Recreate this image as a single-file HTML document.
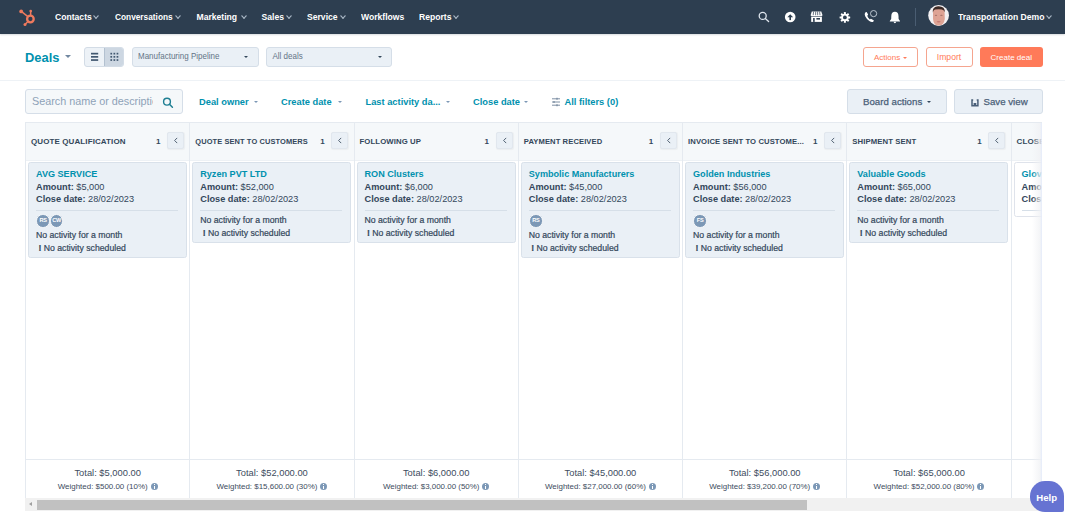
<!DOCTYPE html>
<html><head><meta charset="utf-8">
<style>
*{box-sizing:border-box;margin:0;padding:0}
html,body{width:1065px;height:522px;overflow:hidden;background:#fff;font-family:"Liberation Sans",sans-serif;color:#33475b}
.a{position:absolute;white-space:nowrap}
#nav{position:absolute;left:0;top:0;width:1065px;height:34px;background:#2d3e50;box-shadow:0 1px 1.5px rgba(45,62,80,0.18);z-index:2}
.ni{position:absolute;top:11px;font-size:8.6px;font-weight:bold;color:#fff;line-height:12px;transform:scaleY(1.1);transform-origin:0 50%}
.chev{display:inline-block;width:4px;height:4px;border-right:1px solid #aab8c6;border-bottom:1px solid #aab8c6;transform:rotate(45deg);position:absolute;top:3px}
.dd{position:absolute;top:46.5px;height:20px;background:#eaf0f6;border:1px solid #d5dee8;border-radius:3px;font-size:8px;color:#637486;line-height:18.5px}
.dd .caret{border-left-width:2.2px;border-right-width:2.2px;border-top-width:2.7px;top:8px}
.caret{position:absolute;width:0;height:0;border-left:3px solid transparent;border-right:3px solid transparent;border-top:3px solid #33475b}
.flt{position:absolute;top:96px;font-size:9.3px;font-weight:bold;color:#0091ae;line-height:12px}
.flt .caret{border-top-color:#7c98b6;top:5px;border-left-width:2px;border-right-width:2px;border-top-width:2.5px}
.btn2{position:absolute;top:89px;height:25px;background:#eaf0f6;border:1px solid #d5dee8;border-radius:3px;font-size:9.7px;color:#4a5f78;line-height:23px;-webkit-text-stroke:0.25px #4a5f78}
#board{position:absolute;left:25px;top:122px;width:1017px;height:376px;border:1px solid #e5eaf0;border-right:none;border-bottom:none;overflow:hidden}
.col{position:absolute;top:0;width:164.4px;height:376px;border-right:1px solid #e5eaf0}
.hdr{position:absolute;left:0;top:0;width:100%;height:38px;background:#f5f8fa;border-bottom:1px solid #edf1f5}
.ht{position:absolute;left:5px;top:14px;font-size:8px;font-weight:bold;color:#33475b;line-height:10px;letter-spacing:0.1px}
.hn{position:absolute;left:130px;top:14px;font-size:8px;font-weight:bold;line-height:10px}
.cb{position:absolute;left:141px;top:9px;width:17px;height:17px;background:#eaf0f6;border:1px solid #e1e7ee;border-radius:2px;box-shadow:0.5px 0.5px 1px rgba(0,0,0,0.04)}
.card{position:absolute;left:2px;top:39px;width:159px;background:#eaf0f6;border:1px solid #d9e1ea;border-radius:2.5px}
.nm{position:absolute;left:7px;top:4.5px;font-size:9.1px;font-weight:bold;color:#0091ae;line-height:12px}
.l1{position:absolute;left:7px;top:17.5px;font-size:9.2px;line-height:12px}
.l2{position:absolute;left:7px;top:30px;font-size:9.2px;line-height:12px}
.l1 b,.l2 b{font-weight:bold}
.sep{position:absolute;left:7px;top:47px;width:142px;height:1px;background:#d6dfe8}
.av{position:absolute;top:51px;width:13.5px;height:13.5px;border-radius:50%;background:#7c98b6;border:1px solid #f7f9fb;color:#fff;font-size:5.6px;font-weight:bold;text-align:center;line-height:11.5px;letter-spacing:-0.2px}
.na{position:absolute;left:7px;font-size:8.7px;line-height:10px;color:#33475b;-webkit-text-stroke:0.2px #33475b}
.ftr{position:absolute;left:0;top:336px;width:100%;height:40px;border-top:1px solid #e5eaf0;background:#fff}
.tot{position:absolute;left:0;top:7px;width:100%;text-align:center;font-size:9.35px;line-height:12px;color:#3d4c5e}
.wt{position:absolute;left:0;top:21.5px;width:100%;text-align:center;font-size:7.95px;line-height:10px;color:#3d4c5e}
.info{display:inline-block;width:7px;height:7px;border-radius:50%;background:#7c98b6;vertical-align:-1px;margin-left:3px;position:relative}
.info:after{content:"";position:absolute;left:3px;top:3px;width:1px;height:3px;background:#fff}
.info:before{content:"";position:absolute;left:3px;top:1.3px;width:1px;height:1px;background:#fff}
</style></head><body>
<div id="nav">
 <svg class="a" style="left:14px;top:6px" width="24" height="24" viewBox="14 6 24 24">
  <g stroke="#ef7a5e" fill="none" stroke-linecap="round">
   <circle cx="30.4" cy="19" r="3.3" stroke-width="2.3"/>
   <line x1="30.6" y1="15.4" x2="30.7" y2="11.6" stroke-width="1.5"/>
   <line x1="27.9" y1="16.6" x2="21.6" y2="11.7" stroke-width="1.5"/>
   <line x1="28" y1="21.5" x2="25.2" y2="24.3" stroke-width="1.5"/>
  </g>
  <circle cx="30.7" cy="11" r="1.3" fill="#ef7a5e"/>
  <circle cx="21.2" cy="11.4" r="1.9" fill="#ef7a5e"/>
  <circle cx="25" cy="24.6" r="1.5" fill="#ef7a5e"/>
 </svg>
 <div class="ni" style="left:55px">Contacts<span class="chev" style="left:39px"></span></div>
 <div class="ni" style="left:115px;font-size:8.3px">Conversations<span class="chev" style="left:60.5px"></span></div>
 <div class="ni" style="left:196.5px">Marketing<span class="chev" style="left:45px"></span></div>
 <div class="ni" style="left:261.5px">Sales<span class="chev" style="left:25.5px"></span></div>
 <div class="ni" style="left:307px">Service<span class="chev" style="left:34px"></span></div>
 <div class="ni" style="left:361px">Workflows</div>
 <div class="ni" style="left:419px">Reports<span class="chev" style="left:34.5px"></span></div>


 <svg class="a" style="left:752px;top:6px" width="160" height="22" viewBox="752 6 160 22">
  <circle cx="762.7" cy="15.9" r="3.5" stroke="#dfe6ee" stroke-width="1.3" fill="none"/>
  <line x1="765.3" y1="18.6" x2="768.6" y2="21.6" stroke="#dfe6ee" stroke-width="1.3" stroke-linecap="round"/>
  <circle cx="790.2" cy="17" r="5.3" fill="#fff"/>
  <path d="M787.3 17.2 L790.2 14.2 L793.1 17.2 Z" fill="#2d3e50"/>
  <rect x="789.4" y="16.5" width="1.6" height="3.6" fill="#2d3e50"/>
  <path d="M811.8 11.6 H821.3 L822.5 15.2 Q822.3 15.9 821.5 15.9 H811.6 Q810.8 15.9 810.6 15.2 Z" fill="#fff"/>
  <g stroke="#2d3e50" stroke-width="0.7"><line x1="813.6" y1="11.6" x2="813.2" y2="15.2"/><line x1="815.7" y1="11.6" x2="815.6" y2="15.2"/><line x1="817.6" y1="11.6" x2="817.7" y2="15.2"/><line x1="819.6" y1="11.6" x2="820" y2="15.2"/></g>
  <rect x="811.2" y="16.6" width="10.7" height="5.3" fill="#fff"/>
  <rect x="813.1" y="18" width="1.6" height="3.9" fill="#2d3e50"/>
  <rect x="816.4" y="18" width="3.6" height="1.6" fill="#2d3e50"/>
  <g transform="translate(844.9 17.4)" fill="#fff">
   <circle r="3.7"/>
   <rect x="-1" y="-5.3" width="2" height="2.4" rx="0.3" transform="rotate(0)"/><rect x="-1" y="-5.3" width="2" height="2.4" rx="0.3" transform="rotate(45)"/><rect x="-1" y="-5.3" width="2" height="2.4" rx="0.3" transform="rotate(90)"/><rect x="-1" y="-5.3" width="2" height="2.4" rx="0.3" transform="rotate(135)"/><rect x="-1" y="-5.3" width="2" height="2.4" rx="0.3" transform="rotate(180)"/><rect x="-1" y="-5.3" width="2" height="2.4" rx="0.3" transform="rotate(225)"/><rect x="-1" y="-5.3" width="2" height="2.4" rx="0.3" transform="rotate(270)"/><rect x="-1" y="-5.3" width="2" height="2.4" rx="0.3" transform="rotate(315)"/>
   <circle r="1.9" fill="#2d3e50"/>
  </g>
  <path d="M866.6 12.1 L868 14.3 Q868.2 14.8 867.8 15.2 L867.2 15.8 Q867.9 17.8 869.9 19.6 L870.5 19 Q870.9 18.6 871.4 18.9 L873.6 20.3 Q874.1 20.7 873.6 21.3 L872.8 21.9 Q871.5 22.5 869.3 21 Q866.5 19 865.2 16.2 Q864.4 14.3 864.9 13.2 L865.6 12.3 Q866.1 11.7 866.6 12.1 Z" fill="#fff"/>
  <circle cx="873.6" cy="13.6" r="3.1" stroke="#c9d3dd" stroke-width="0.9" fill="none"/>
  <path d="M894.9 11.8 Q898.3 11.8 898.5 16 L898.6 19 L900 20.9 Q900.2 21.4 899.6 21.4 H890.2 Q889.6 21.4 889.8 20.9 L891.2 19 L891.3 16 Q891.5 11.8 894.9 11.8 Z" fill="#fff"/>
  <path d="M893.6 21.8 H896.2 Q896 23.2 894.9 23.2 Q893.8 23.2 893.6 21.8 Z" fill="#fff"/>
 </svg>
 <div class="a" style="left:915px;top:8px;width:1px;height:18px;background:#4a5d72"></div>
 <svg class="a" style="left:927px;top:4px" width="23" height="23" viewBox="927 4 23 23">
  <defs><clipPath id="avc"><circle cx="938.6" cy="15.5" r="10.3"/></clipPath></defs>
  <circle cx="938.6" cy="15.5" r="10.4" fill="#f3f1f3"/>
  <g clip-path="url(#avc)">
   <path d="M933 12 Q932.6 7 938.5 6.4 Q944.6 6.8 944.6 12 L944.8 19 Q944 25 938.8 26 Q933.6 25.5 933 19 Z" fill="#dea394"/>
   <path d="M932.8 12.5 Q932 6.8 938.4 6.2 Q945.2 6.4 944.8 12.3 Q943.8 9.6 941.8 9.4 Q938 9 935 9.6 Q933.4 10.2 932.8 12.5 Z" fill="#3b2a26"/>
   <ellipse cx="936" cy="15.2" rx="1.2" ry="0.5" fill="#9c6a62"/>
   <ellipse cx="941.4" cy="15.2" rx="1.2" ry="0.5" fill="#9c6a62"/>
   <ellipse cx="938.7" cy="21.8" rx="2" ry="0.7" fill="#c77a72"/>
  </g>
 </svg>
 <div class="ni" style="left:958px">Transportation Demo<span class="chev" style="left:89px"></span></div>
</div>

<!-- header row -->
<div class="a" style="left:25px;top:48px;font-size:12.9px;font-weight:bold;color:#0091ae;line-height:20px">Deals</div>
<div class="caret" style="left:64.5px;top:55px;border-left-width:3.5px;border-right-width:3.5px;border-top-width:3.8px;border-top-color:#7187a0"></div>
<div class="a" style="left:84px;top:46.5px;width:40px;height:20px;border:1px solid #d3dce6;border-radius:3px;background:#edf2f7;overflow:hidden">
 <div class="a" style="left:19px;top:0;width:20px;height:18px;background:#cdd7e2;border-left:1px solid #b3c1d0"></div>
 <svg class="a" style="left:-1px;top:-1px" width="40" height="20" viewBox="84 47 40 20">
  <g fill="#425870"><rect x="91" y="52.8" width="7.2" height="1.7"/><rect x="91" y="56" width="7.2" height="1.7"/><rect x="91" y="59.2" width="7.2" height="1.7"/></g>
  <g fill="#425870"><rect x="110.4" y="52.8" width="1.7" height="1.7"/><rect x="113.5" y="52.8" width="1.7" height="1.7"/><rect x="116.6" y="52.8" width="1.7" height="1.7"/>
  <rect x="110.4" y="56" width="1.7" height="1.7"/><rect x="113.5" y="56" width="1.7" height="1.7"/><rect x="116.6" y="56" width="1.7" height="1.7"/>
  <rect x="110.4" y="59.2" width="1.7" height="1.7"/><rect x="113.5" y="59.2" width="1.7" height="1.7"/><rect x="116.6" y="59.2" width="1.7" height="1.7"/></g>
 </svg>
</div>
<div class="dd" style="left:132px;width:126.5px"><span class="a" style="left:5px;top:0.8px;transform:scaleY(1.12)">Manufacturing Pipeline</span><span class="caret" style="left:110.5px"></span></div>
<div class="dd" style="left:266px;width:126px"><span class="a" style="left:5.5px;top:0.8px;transform:scaleY(1.12)">All deals</span><span class="caret" style="left:110.5px"></span></div>

<div class="a" style="left:863px;top:47px;width:55px;height:20px;border:1px solid #f5a58f;border-radius:3px;background:#fff;color:#ff7a59;font-size:8px;line-height:19.5px;text-indent:10px">Actions<span class="caret" style="left:38.5px;top:8.5px;border-top-color:#ff7a59;border-left-width:2px;border-right-width:2px;border-top-width:2.5px"></span></div>
<div class="a" style="left:925.5px;top:47px;width:47px;height:20px;border:1px solid #f5a58f;border-radius:3px;background:#fff;color:#ff7a59;font-size:8.6px;line-height:19.5px;text-align:center">Import</div>
<div class="a" style="left:980px;top:47px;width:62.5px;height:20px;border-radius:3px;background:#ff7a59;color:#fff;font-size:8px;line-height:21px;text-align:center">Create deal</div>

<div class="a" style="left:0;top:80px;width:1065px;height:1px;background:#eef2f6"></div>

<!-- filter row -->
<div class="a" style="left:25px;top:88.5px;width:158px;height:25.5px;border:1px solid #d5dee8;border-radius:3px;background:#f5f8fa"></div>
<div class="a" style="left:32px;top:95px;font-size:10.8px;line-height:13px;color:#8ea2b8;width:121px;overflow:hidden">Search name or description</div>
<svg class="a" style="left:162px;top:96.5px" width="12" height="12" viewBox="0 0 12 12"><circle cx="5" cy="4.7" r="3.4" stroke="#1f7f93" stroke-width="1.4" fill="none"/><line x1="7.5" y1="7.3" x2="10.4" y2="10.2" stroke="#1f7f93" stroke-width="1.5" stroke-linecap="round"/></svg>

<div class="flt" style="left:199px">Deal owner<span class="caret" style="left:55px"></span></div>
<div class="flt" style="left:281px">Create date<span class="caret" style="left:57px"></span></div>
<div class="flt" style="left:365.5px">Last activity da...<span class="caret" style="left:80px"></span></div>
<div class="flt" style="left:473px">Close date<span class="caret" style="left:51px"></span></div>
<svg class="a" style="left:551px;top:97px" width="10" height="10" viewBox="0 0 10 10"><g stroke="#6f839a" stroke-width="0.9"><line x1="1" y1="1.8" x2="9" y2="1.8"/><line x1="1" y1="5" x2="9" y2="5"/><line x1="1" y1="8.2" x2="9" y2="8.2"/></g><g stroke="#6f839a" stroke-width="1.1"><line x1="6" y1="0.8" x2="6" y2="2.8"/><line x1="3" y1="4" x2="3" y2="6"/><line x1="6" y1="7.2" x2="6" y2="9.2"/></g></svg>
<div class="flt" style="left:564.5px">All filters (0)</div>

<div class="btn2" style="left:847px;width:100px"><span class="a" style="left:15px">Board actions</span><span class="caret" style="left:78.5px;top:10.5px;border-left-width:2px;border-right-width:2px;border-top-width:2.5px"></span></div>
<div class="btn2" style="left:954px;width:89px"><svg class="a" style="left:15.5px;top:8.5px" width="8" height="8" viewBox="0 0 8 8"><path d="M1 0.3V6.8H6.9V0.3 M1 0.9H2.2 M5.7 0.9H6.9" stroke="#4a5f78" stroke-width="1.5" fill="none"/><rect x="2.6" y="4" width="2.7" height="2" fill="#4a5f78"/></svg><span class="a" style="left:28.5px">Save view</span></div>

<!-- board -->
<div id="board">
<div class="col" style="left:0.0px">
 <div class="hdr"><span class="ht" style="font-size:8px">QUOTE QUALIFICATION</span><span class="hn">1</span><span class="cb"><svg style="position:absolute;left:5.2px;top:3.7px" width="6" height="7" viewBox="0 0 6 7"><path d="M4.2 0.9 L1.6 3.5 L4.2 6.1" stroke="#4a5a6c" stroke-width="0.95" fill="none"/></svg></span></div>
 <div class="card" style="height:96px">
  <span class="nm">AVG SERVICE</span>
  <span class="l1"><b>Amount:</b> $5,000</span>
  <span class="l2"><b>Close date:</b> 28/02/2023</span>
  <span class="sep"></span>
  <span class="av" style="left:7.35px">RS</span>
  <span class="av" style="left:20.85px">CW</span>
  <span class="na" style="top:67px">No activity for a month</span>
  <span class="na" style="top:80px">&nbsp;<b>!</b> No activity scheduled</span>
 </div>
 <div class="ftr"><div class="tot">Total: $5,000.00</div><div class="wt">Weighted: $500.00 (10%)<span class="info"></span></div></div>
</div>
<div class="col" style="left:164.26px">
 <div class="hdr"><span class="ht" style="font-size:7.46px">QUOTE SENT TO CUSTOMERS</span><span class="hn">1</span><span class="cb"><svg style="position:absolute;left:5.2px;top:3.7px" width="6" height="7" viewBox="0 0 6 7"><path d="M4.2 0.9 L1.6 3.5 L4.2 6.1" stroke="#4a5a6c" stroke-width="0.95" fill="none"/></svg></span></div>
 <div class="card" style="height:81px">
  <span class="nm">Ryzen PVT LTD</span>
  <span class="l1"><b>Amount:</b> $52,000</span>
  <span class="l2"><b>Close date:</b> 28/02/2023</span>
  <span class="sep"></span>
  <span class="na" style="top:52px">No activity for a month</span>
  <span class="na" style="top:65px">&nbsp;<b>!</b> No activity scheduled</span>
 </div>
 <div class="ftr"><div class="tot">Total: $52,000.00</div><div class="wt">Weighted: $15,600.00 (30%)<span class="info"></span></div></div>
</div>
<div class="col" style="left:328.52px">
 <div class="hdr"><span class="ht" style="font-size:7.76px">FOLLOWING UP</span><span class="hn">1</span><span class="cb"><svg style="position:absolute;left:5.2px;top:3.7px" width="6" height="7" viewBox="0 0 6 7"><path d="M4.2 0.9 L1.6 3.5 L4.2 6.1" stroke="#4a5a6c" stroke-width="0.95" fill="none"/></svg></span></div>
 <div class="card" style="height:81px">
  <span class="nm">RON Clusters</span>
  <span class="l1"><b>Amount:</b> $6,000</span>
  <span class="l2"><b>Close date:</b> 28/02/2023</span>
  <span class="sep"></span>
  <span class="na" style="top:52px">No activity for a month</span>
  <span class="na" style="top:65px">&nbsp;<b>!</b> No activity scheduled</span>
 </div>
 <div class="ftr"><div class="tot">Total: $6,000.00</div><div class="wt">Weighted: $3,000.00 (50%)<span class="info"></span></div></div>
</div>
<div class="col" style="left:492.78px">
 <div class="hdr"><span class="ht" style="font-size:7.62px">PAYMENT RECEIVED</span><span class="hn">1</span><span class="cb"><svg style="position:absolute;left:5.2px;top:3.7px" width="6" height="7" viewBox="0 0 6 7"><path d="M4.2 0.9 L1.6 3.5 L4.2 6.1" stroke="#4a5a6c" stroke-width="0.95" fill="none"/></svg></span></div>
 <div class="card" style="height:96px">
  <span class="nm">Symbolic Manufacturers</span>
  <span class="l1"><b>Amount:</b> $45,000</span>
  <span class="l2"><b>Close date:</b> 28/02/2023</span>
  <span class="sep"></span>
  <span class="av" style="left:7.35px">RS</span>
  <span class="na" style="top:67px">No activity for a month</span>
  <span class="na" style="top:80px">&nbsp;<b>!</b> No activity scheduled</span>
 </div>
 <div class="ftr"><div class="tot">Total: $45,000.00</div><div class="wt">Weighted: $27,000.00 (60%)<span class="info"></span></div></div>
</div>
<div class="col" style="left:657.04px">
 <div class="hdr"><span class="ht" style="font-size:7.67px">INVOICE SENT TO CUSTOME...</span><span class="hn">1</span><span class="cb"><svg style="position:absolute;left:5.2px;top:3.7px" width="6" height="7" viewBox="0 0 6 7"><path d="M4.2 0.9 L1.6 3.5 L4.2 6.1" stroke="#4a5a6c" stroke-width="0.95" fill="none"/></svg></span></div>
 <div class="card" style="height:96px">
  <span class="nm">Golden Industries</span>
  <span class="l1"><b>Amount:</b> $56,000</span>
  <span class="l2"><b>Close date:</b> 28/02/2023</span>
  <span class="sep"></span>
  <span class="av" style="left:7.35px">FS</span>
  <span class="na" style="top:67px">No activity for a month</span>
  <span class="na" style="top:80px">&nbsp;<b>!</b> No activity scheduled</span>
 </div>
 <div class="ftr"><div class="tot">Total: $56,000.00</div><div class="wt">Weighted: $39,200.00 (70%)<span class="info"></span></div></div>
</div>
<div class="col" style="left:821.3px">
 <div class="hdr"><span class="ht" style="font-size:7.74px">SHIPMENT SENT</span><span class="hn">1</span><span class="cb"><svg style="position:absolute;left:5.2px;top:3.7px" width="6" height="7" viewBox="0 0 6 7"><path d="M4.2 0.9 L1.6 3.5 L4.2 6.1" stroke="#4a5a6c" stroke-width="0.95" fill="none"/></svg></span></div>
 <div class="card" style="height:81px">
  <span class="nm">Valuable Goods</span>
  <span class="l1"><b>Amount:</b> $65,000</span>
  <span class="l2"><b>Close date:</b> 28/02/2023</span>
  <span class="sep"></span>
  <span class="na" style="top:52px">No activity for a month</span>
  <span class="na" style="top:65px">&nbsp;<b>!</b> No activity scheduled</span>
 </div>
 <div class="ftr"><div class="tot">Total: $65,000.00</div><div class="wt">Weighted: $52,000.00 (80%)<span class="info"></span></div></div>
</div>
<div class="col" style="left:985.56px;border-right:none">
 <div class="hdr"><span class="ht">CLOSED WON</span></div>
 <div class="card" style="height:55px;background:#fff;border-color:#dfe3eb">
  <span class="nm">Glove Traders</span>
  <span class="l1"><b>Amount:</b> $20,000</span>
  <span class="l2"><b>Close date:</b> 28/02/2023</span>
  <span class="sep"></span>
 </div>
 <div class="ftr"></div>
</div>
<div class="a" style="left:1006px;top:0;width:10px;height:376px;background:linear-gradient(to right,rgba(242,243,246,0),rgba(240,241,244,0.75) 80%,rgba(228,235,250,1))"></div>
</div>

<!-- scrollbar -->
<div class="a" style="left:25px;top:498px;width:1018px;height:13px;background:#f1f1f1"></div>
<div class="a" style="left:29px;top:501.8px;width:0;height:0;border-top:2.7px solid transparent;border-bottom:2.7px solid transparent;border-right:3.2px solid #a0a0a0"></div>
<div class="a" style="left:36.5px;top:500px;width:770px;height:9.5px;background:#c1c1c1"></div>

<!-- help -->
<div class="a" style="left:1030px;top:481px;width:33.5px;height:31px;background:#6673d2;border-radius:15px 15px 2px 15px;color:#fff;font-size:9.6px;font-weight:bold;line-height:34px;text-align:center">Help</div>
</body></html>
